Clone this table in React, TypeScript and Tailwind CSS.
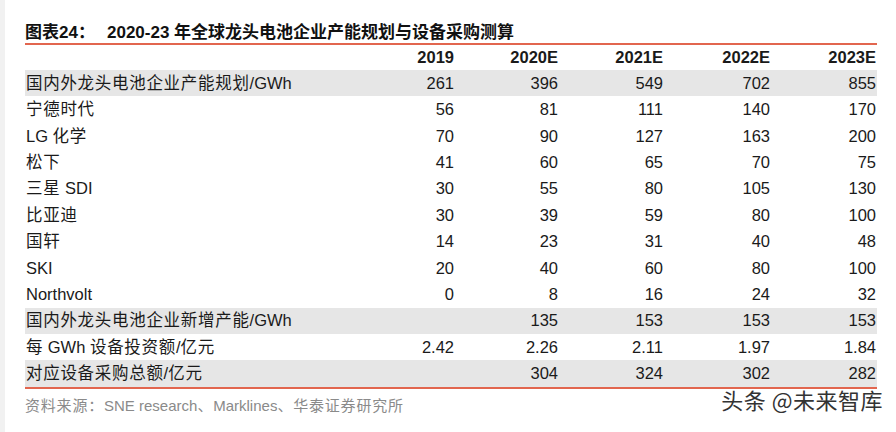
const cols = ["2019", "2020E", "2021E", "2022E", "2023E"]

const rows: { label: string; values: string[]; shaded?: boolean }[] = [
  { label: "国内外龙头电池企业产能规划/GWh", values: ["261", "396", "549", "702", "855"], shaded: true },
  { label: "宁德时代", values: ["56", "81", "111", "140", "170"] },
  { label: "LG 化学", values: ["70", "90", "127", "163", "200"] },
  { label: "松下", values: ["41", "60", "65", "70", "75"] },
  { label: "三星 SDI", values: ["30", "55", "80", "105", "130"] },
  { label: "比亚迪", values: ["30", "39", "59", "80", "100"] },
  { label: "国轩", values: ["14", "23", "31", "40", "48"] },
  { label: "SKI", values: ["20", "40", "60", "80", "100"] },
  { label: "Northvolt", values: ["0", "8", "16", "24", "32"] },
  { label: "国内外龙头电池企业新增产能/GWh", values: ["", "135", "153", "153", "153"], shaded: true },
  { label: "每 GWh 设备投资额/亿元", values: ["2.42", "2.26", "2.11", "1.97", "1.84"] },
  { label: "对应设备采购总额/亿元", values: ["", "304", "324", "302", "282"], shaded: true },
]

const grid = "grid grid-cols-[325px_104px_104px_105px_107px_106px] items-center"

// chinese runs get a bit of spacing, the scan uses a wide kai font
function Label({ text, spacing }: { text: string; spacing: string }) {
  const parts = text.split(/([\u4e00-\u9fff：、]+)/)
  return (
    <>
      {parts.map((p, i) =>
        /[\u4e00-\u9fff：、]/.test(p) ? (
          <span key={i} className={spacing}>{p}</span>
        ) : (
          <span key={i}>{p}</span>
        )
      )}
    </>
  )
}

export default function App() {
  return (
    <div className="w-[896px] h-[432px] bg-white border-l-[5px] border-[#f1f1f1] pl-[20px] pt-[23px] font-['Liberation_Sans','Noto_Sans_CJK_SC',sans-serif] text-[#1a1a1a]">
      <div className="w-[852px]">
        <div className="flex items-center h-[19px] text-[17px] font-bold text-[#111]">
          <span className="w-[82px]">图表24：</span>
          <span>2020-23 年全球龙头电池企业产能规划与设备采购测算</span>
        </div>
        <div className="h-[2px] mt-[1px] bg-[#e2664f]" />
        <div className={`${grid} h-[25px] text-[16.5px] font-bold`}>
          <div />
          {cols.map((c) => (
            <div key={c} className="text-right">{c}</div>
          ))}
        </div>
        {rows.map((r, i) => (
          <div key={i} className={`${grid} h-[26.4px] text-[16.5px] ${r.shaded ? "bg-[#e6e6e6]" : ""}`}>
            <div className="pl-[1px] whitespace-nowrap">
              <Label text={r.label} spacing="tracking-[0.7px]" />
            </div>
            {r.values.map((v, j) => (
              <div key={j} className="text-right">{v}</div>
            ))}
          </div>
        ))}
        <div className="h-[2px] bg-[#e2664f]" />
        <div className="flex justify-between items-start">
          <div className="pt-[6px] text-[15px] text-[#8a8a8a] whitespace-nowrap">
            <Label text="资料来源：SNE research、Marklines、华泰证券研究所" spacing="tracking-[0.8px]" />
          </div>
          <div className="-mr-[6px] -mt-[6px] text-[22px] tracking-[0.5px] text-[#333] [text-shadow:0_0_2px_#fff,0_0_2px_#fff] font-['Noto_Sans_CJK_SC',sans-serif]">头条 @未来智库</div>
        </div>
      </div>
    </div>
  )
}
